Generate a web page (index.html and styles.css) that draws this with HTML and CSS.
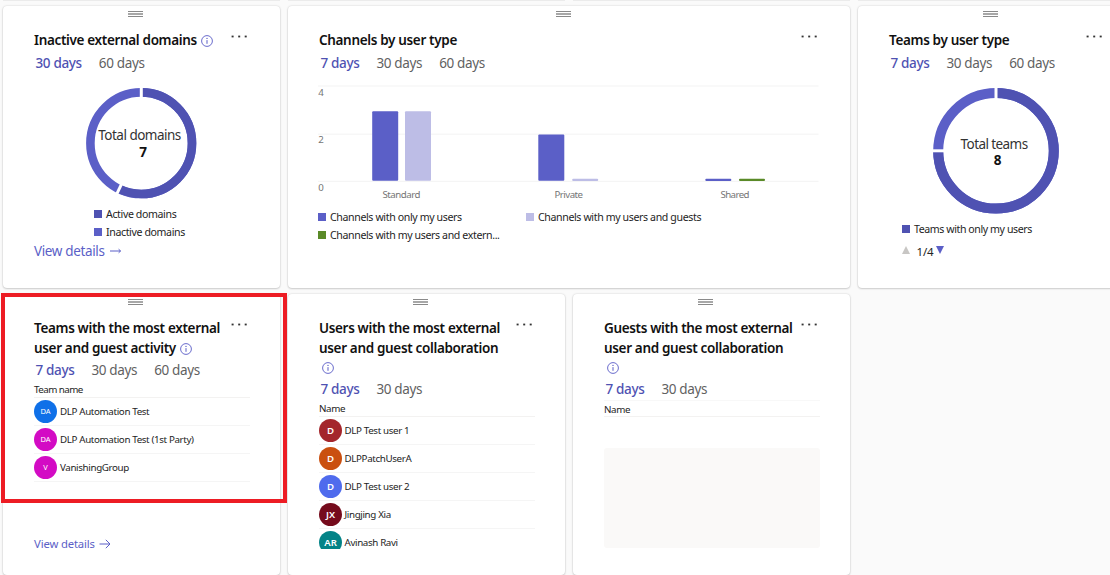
FILE: index.html
```html
<!DOCTYPE html>
<html lang="en">
<head>
<meta charset="utf-8">
<title>Teams analytics</title>
<link rel="stylesheet" href="styles.css">
</head>
<body>
<svg class="defs" width="0" height="0">
  <symbol id="info" viewBox="0 0 12 12"><circle cx="6" cy="6" r="5.4" fill="none" stroke="#6a6ccc" stroke-width="1"/><rect x="5.5" y="5.1" width="1" height="3.7" fill="#5b5fc7"/><circle cx="6" cy="3.4" r=".7" fill="#5b5fc7"/></symbol>
  <symbol id="dots" viewBox="0 0 17 3"><rect x=".6" y=".6" width="2" height="1.8"/><rect x="7.2" y=".6" width="2" height="1.8"/><rect x="13.7" y=".6" width="2" height="1.8"/></symbol>
</svg>
<main class="board">
  <div class="stub"></div><div class="stub"></div><div class="stub"></div><div class="stub"></div>

  <section class="card">
    <div class="handle"></div>
    <header class="head"><h2 class="title">Inactive external domains<svg class="info"><use href="#info"/></svg></h2><svg class="more"><use href="#dots"/></svg></header>
    <nav class="tabs"><span class="tab active">30 days</span><span class="tab">60 days</span></nav>
    <svg class="donut donut-small" viewBox="0 0 112 112">
      <circle cx="55.2" cy="55.2" r="50.8" class="ring light" stroke-width="8.6"/>
      <circle cx="55.2" cy="55.2" r="50.8" class="ring dark" stroke-width="8.6" pathLength="7" stroke-dasharray="4 3" transform="rotate(-90 55.2 55.2)"/>
      <path class="gap" d="M55.3 -1V12"/>
      <path class="gap" d="M55.2 -1V12" transform="rotate(205.7 55.2 55.2)"/>
      <text class="donut-label" x="12.3" y="52.3" textLength="83">Total domains</text>
      <text class="donut-value" x="57" y="69.3">7</text>
    </svg>
    <ul class="legend legend-domains">
      <li><i class="key dark-bg"></i><span>Active domains</span></li>
      <li><i class="key indigo-bg"></i><span>Inactive domains</span></li>
    </ul>
    <a class="link link-large">View details<svg class="arrow-s" viewBox="0 0 12 8"><path d="M0 4H10.5M8.6 2.2L10.6 4L8.6 5.8"/></svg></a>
  </section>

  <section class="card wide">
    <div class="handle"></div>
    <header class="head"><h2 class="title">Channels by user type</h2><svg class="more"><use href="#dots"/></svg></header>
    <nav class="tabs"><span class="tab active">7 days</span><span class="tab">30 days</span><span class="tab">60 days</span></nav>
    <svg class="bars" viewBox="318 80 501 122">
      <path class="grid" d="M318 86H818.5M318 134.2H818.5M318 181.3H818.5"/>
      <g class="axis"><text x="318.3" y="96.2">4</text><text x="318.3" y="143.4">2</text><text x="318.3" y="190.7">0</text></g>
      <g class="indigo"><rect x="372.2" y="111.3" width="26" height="69.5" rx="1"/><rect x="538.3" y="134.5" width="26" height="46.3" rx="1"/><rect x="705.3" y="178.7" width="26" height="2.2" rx="1"/></g>
      <g class="pale"><rect x="405" y="111.3" width="26" height="69.5" rx="1"/><rect x="572.2" y="178.7" width="26" height="2.2" rx="1"/></g>
      <rect class="green" x="739" y="178.7" width="26" height="2.2" rx="1"/>
      <g class="axis"><text x="382.5" y="198" textLength="38">Standard</text><text x="554.5" y="198" textLength="28.5">Private</text><text x="720.5" y="198" textLength="29">Shared</text></g>
    </svg>
    <ul class="legend legend-channels">
      <li><i class="key indigo-bg"></i><span>Channels with only my users</span></li>
      <li><i class="key pale-bg"></i><span>Channels with my users and guests</span></li>
      <li><i class="key green-bg"></i><span>Channels with my users and extern...</span></li>
    </ul>
  </section>

  <section class="card">
    <div class="handle"></div>
    <header class="head"><h2 class="title">Teams by user type</h2><svg class="more"><use href="#dots"/></svg></header>
    <nav class="tabs"><span class="tab active">7 days</span><span class="tab">30 days</span><span class="tab">60 days</span></nav>
    <svg class="donut donut-large" viewBox="0 0 127 127">
      <circle cx="63" cy="62.8" r="57.8" class="ring light" stroke-width="10"/>
      <circle cx="63" cy="62.8" r="57.8" class="ring dark" stroke-width="10" pathLength="4" stroke-dasharray="3 1" transform="rotate(-90 63 62.8)"/>
      <path class="gap" d="M63 -1V12"/>
      <path class="gap" d="M-1 62.8H12"/>
      <text class="donut-label" x="27.6" y="60.8" textLength="67.5">Total teams</text>
      <text class="donut-value" x="64.7" y="77.2">8</text>
    </svg>
    <ul class="legend legend-teams"><li><i class="key dark-bg"></i><span>Teams with only my users</span></li></ul>
    <div class="pager"><svg viewBox="0 0 8 8"><path fill="#c8c6c4" d="M4 0L8 8H0z"/></svg><span>1/4</span><svg viewBox="0 0 8 8"><path fill="#5b5fc7" d="M0 0H8L4 8z"/></svg></div>
  </section>

  <section class="card">
    <div class="handle"></div>
    <header class="head"><h2 class="title">Teams with the most external<br>user and guest activity<svg class="info"><use href="#info"/></svg></h2><svg class="more"><use href="#dots"/></svg></header>
    <nav class="tabs tabs-list"><span class="tab active">7 days</span><span class="tab">30 days</span><span class="tab">60 days</span></nav>
    <div class="list thin">
      <div class="list-head">Team name</div>
      <div class="row"><b class="avatar blue">DA</b><span>DLP Automation Test</span></div>
      <div class="row"><b class="avatar magenta">DA</b><span>DLP Automation Test (1st Party)</span></div>
      <div class="row"><b class="avatar magenta">V</b><span>VanishingGroup</span></div>
    </div>
    <a class="link link-small">View details<svg class="arrow-l" viewBox="0 0 12 10"><path d="M.5 5H11M6.8 .8L11 5L6.8 9.2"/></svg></a>
  </section>

  <section class="card">
    <div class="handle"></div>
    <header class="head"><h2 class="title">Users with the most external<br>user and guest collaboration<br><svg class="info info-own"><use href="#info"/></svg></h2><svg class="more"><use href="#dots"/></svg></header>
    <nav class="tabs tabs-list tabs-low"><span class="tab active">7 days</span><span class="tab">30 days</span></nav>
    <div class="list clipped">
      <div class="list-head">Name</div>
      <div class="row"><b class="avatar red">D</b><span>DLP Test user 1</span></div>
      <div class="row"><b class="avatar orange">D</b><span>DLPPatchUserA</span></div>
      <div class="row"><b class="avatar azure">D</b><span>DLP Test user 2</span></div>
      <div class="row"><b class="avatar wine">JX</b><span>Jingjing Xia</span></div>
      <div class="row"><b class="avatar teal">AR</b><span>Avinash Ravi</span></div>
    </div>
  </section>

  <section class="card">
    <div class="handle"></div>
    <header class="head"><h2 class="title">Guests with the most external<br>user and guest collaboration<br><svg class="info info-own"><use href="#info"/></svg></h2><svg class="more"><use href="#dots"/></svg></header>
    <nav class="tabs tabs-list tabs-low"><span class="tab active">7 days</span><span class="tab">30 days</span></nav>
    <div class="list"><div class="list-head ruled">Name</div></div>
    <div class="empty"></div>
  </section>
</main>
<div class="highlight"></div>
</body>
</html>
```
FILE: styles.css
```css
* { box-sizing: border-box; }
body { margin: 0; width: 1110px; height: 575px; overflow: hidden; background: #fafafa; color: #242424; font-family: "Noto Sans", "Open Sans", sans-serif; position: relative; }
.defs { position: absolute; }
svg { display: block; flex: none; }
.board { display: grid; grid-template-columns: repeat(4, 277px); grid-template-rows: 1px 282px 281px; column-gap: 8px; row-gap: 0; padding-left: 3px; width: 1140px; }
.stub { background: #ebebeb; }
.card { background: #fff; border-radius: 4px; box-shadow: 0 0 2px rgba(0,0,0,.18), 0 1px 2px rgba(0,0,0,.14); padding: 0 30px 0 31px; margin-top: 5px; height: 282px; }
.card:nth-of-type(n+4) { margin-top: 11px; height: 281px; }
.wide { grid-column: span 2; width: 562px; }
.handle { width: 15px; height: 6px; margin: 5px auto 0; border-top: 1px solid #8a8a8a; border-bottom: 1px solid #8a8a8a; background: linear-gradient(#fff 1px, #a8a8a8 1px, #a8a8a8 3px, #fff 3px); transform: translateX(-7px); }
.wide .handle { transform: translateX(-6px); }
.head { display: flex; justify-content: space-between; margin-top: 13px; }
.title { margin: 0; font-size: 13.5px; line-height: 20px; font-weight: 600; color: #111; letter-spacing: -.34px; white-space: nowrap; }
.info { display: inline-block; width: 12px; height: 12px; margin-left: 4px; vertical-align: -1.5px; }
.info-own { margin-left: 3px; vertical-align: -1px; }
.more { width: 17px; height: 3px; margin: 5px 2px 0 -20px; fill: #333; }
.tabs { display: flex; gap: 17px; height: 22px; padding-left: 1.5px; margin-top: 2px; font-size: 13.5px; line-height: 22px; letter-spacing: -.35px; color: #616161; white-space: nowrap; }
.tabs-list { height: 21px; line-height: 20px; margin-top: 2px; }
.tabs-low { margin-top: 1px; }
.active { color: #4f52b2; font-weight: 500; }
.ring { fill: none; }
.light { stroke: #5b5fc7; }
.dark { stroke: #4f52b2; }
.gap { stroke: #fff; stroke-width: 3; fill: none; }
.donut-small { width: 112px; height: 112px; margin: 14px 0 0 52px; }
.donut-large { width: 127px; height: 127px; margin: 14px 0 0 44px; }
.donut-label { font-size: 13.5px; fill: #333; }
.donut-value { font-size: 13.5px; font-weight: 700; text-anchor: middle; fill: #111; }
.legend { list-style: none; margin: 0; padding: 0; font-size: 10.6px; line-height: 18px; letter-spacing: -.38px; }
.legend li { display: flex; align-items: center; gap: 4px; white-space: nowrap; }
.key { width: 8px; height: 8px; }
.dark-bg { background: #4f52b2; }
.indigo-bg { background: #5b5fc7; }
.pale-bg { background: #bdbde6; }
.green-bg { background: #5a8a28; }
.legend-domains { margin: 5px 0 0 60px; }
.legend-channels { display: grid; grid-template-columns: 208px 208px; margin: 6px 0 0 -1px; }
.legend-teams { margin: 5px 0 0 13px; letter-spacing: -.42px; }
.link { display: flex; align-items: center; color: #5b5fc7; white-space: nowrap; }
.link path { fill: none; stroke: #5b5fc7; stroke-width: 1; }
.link-large { font-size: 13.5px; line-height: 20px; letter-spacing: -.36px; gap: 5px; }
.link-small { font-size: 11.3px; line-height: 16px; letter-spacing: -.15px; gap: 4px; margin-top: 54px; }
.arrow-s { width: 12px; height: 8px; }
.arrow-l { width: 12px; height: 10px; }
.bars { width: 501px; height: 122px; margin: 6px 0 0 -1px; }
.grid { stroke: #f3f3f3; stroke-width: 1; }
.axis { font-size: 9.7px; fill: #757575; }
.indigo { fill: #5b5fc7; }
.pale { fill: #bdbde6; }
.green { fill: #5a8a28; }
.pager { display: flex; margin: 5px 0 0 13px; font-size: 11.5px; line-height: 18px; }
.pager svg { width: 8px; height: 8px; margin-top: 3px; }
.pager span { margin: 0 2.5px 0 6.5px; letter-spacing: -.2px; }
.list { width: 216px; font-size: 9.8px; letter-spacing: -.37px; }
.list-head { line-height: 14px; height: 17px; padding-top: 2px; border-bottom: 1px solid #f3f2f1; }
.thin .list-head { letter-spacing: -.55px; }
.ruled { border-top: 1px solid #f8f8f8; }
.row { height: 28px; display: flex; align-items: center; gap: 3px; border-bottom: 1px solid #f5f5f5; }
.row span { white-space: nowrap; }
.avatar { width: 23px; height: 23px; flex: none; border-radius: 50%; color: #fff; font-size: 9.6px; font-weight: 600; letter-spacing: -.1px; line-height: 23px; text-align: center; }
.thin .avatar { font-size: 7.5px; font-weight: 400; }
.blue { background: #0f70e8; } .magenta { background: #d30bc4; } .red { background: #a4262c; } .orange { background: #ca5010; } .azure { background: #4f6bed; } .wine { background: #750b1c; } .teal { background: #038387; }
.clipped { height: 149px; overflow: hidden; }
.clipped .row { gap: 2.5px; }
.empty { width: 216px; height: 100px; margin-top: 31px; border-radius: 3px; background: #faf9f8; }
.highlight { position: absolute; left: 1px; top: 293px; width: 285.5px; height: 210px; border: 4px solid #ed1c24; }
```
